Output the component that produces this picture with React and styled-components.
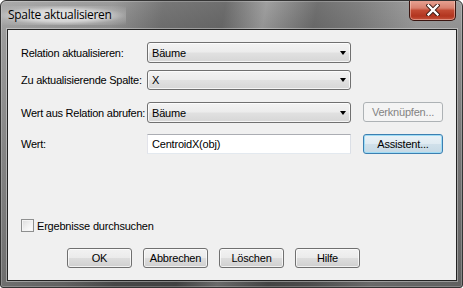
import React from "react";
import styled, { createGlobalStyle, css } from "styled-components";

const Global = createGlobalStyle`
  html, body { margin: 0; padding: 0; background: #ffffff; }
  body { width: 463px; height: 288px; overflow: hidden; }
  * { box-sizing: border-box; }
`;

const Window = styled.div`
  width: 463px;
  height: 288px;
  display: flex;
  flex-direction: column;
  border: 1px solid #343434;
  border-radius: 6px 6px 3px 3px;
  overflow: hidden;
  padding: 0 5px 6px 6px;
  background:
    linear-gradient(100deg,
      rgba(255,255,255,0.2) 0%,
      rgba(255,255,255,0.05) 22%,
      rgba(0,0,0,0.2) 32%,
      rgba(0,0,0,0.26) 44%,
      rgba(255,255,255,0.1) 52%,
      rgba(0,0,0,0.24) 62%,
      rgba(0,0,0,0.14) 70%,
      rgba(255,255,255,0.1) 82%,
      rgba(255,255,255,0.05) 100%),
    linear-gradient(to bottom, #959595 0%, #848484 12%, #6c6c6c 55%, #585858 100%);
  box-shadow: inset 0 0 0 1px rgba(255,255,255,0.22);
`;

const TitleBar = styled.div`
  height: 28px;
  display: flex;
  align-items: flex-start;
  justify-content: space-between;
  flex: none;
`;

const Title = styled.span`
  margin-top: 5px;
  margin-left: -9px;
  padding: 2px 14px 3px 10px;
  font-family: "Open Sans", "Noto Sans", sans-serif;
  font-size: 12px;
  letter-spacing: -0.3px;
  line-height: 14px;
  color: #000;
  background: radial-gradient(ellipse at center,
    rgba(235,235,235,0.95) 0%,
    rgba(225,225,225,0.8) 45%,
    rgba(200,200,200,0.35) 70%,
    rgba(160,160,160,0) 100%);
`;

const CloseButton = styled.div`
  width: 47px;
  height: 21px;
  margin-top: -1px;
  margin-right: 1px;
  border: 1px solid #3b1510;
  border-top: none;
  border-radius: 0 0 5px 5px;
  display: flex;
  align-items: center;
  justify-content: center;
  background: linear-gradient(to bottom,
    #e8a596 0%, #d8806e 40%, #c24a33 52%, #b2351f 80%, #c5533d 100%);
  box-shadow: inset 0 0 0 1px rgba(255,220,210,0.45);
`;

const Client = styled.div`
  flex: 1;
  display: flex;
  flex-direction: column;
  background: #f0f0f0;
  border: 1px solid #232323;
  box-shadow: 0 0 0 1px rgba(255,255,255,0.35);
  padding: 12px 0 0 13px;
  font-family: "Liberation Sans", Arial, sans-serif;
  font-size: 11px;
  color: #000;
`;

const Form = styled.div`
  display: grid;
  grid-template-columns: 126px 204px 92px;
`;

const Row = styled.div`
  display: contents;
`;

const Label = styled.label`
  display: flex;
  align-items: center;
  white-space: nowrap;
  letter-spacing: -0.25px;
  margin-top: ${(p) => p.$top || 0}px;
  height: ${(p) => p.$h || 21}px;
`;

const Combo = styled.div`
  margin-top: ${(p) => p.$top || 0}px;
  height: ${(p) => p.$h || 21}px;
  display: flex;
  align-items: center;
  justify-content: space-between;
  padding: 0 4px 0 4px;
  border: 1px solid #707070;
  border-radius: 3px;
  background: linear-gradient(to bottom, #f3f3f3 0%, #ececec 48%, #e1e1e1 52%, #d6d6d6 100%);
  box-shadow: inset 0 0 0 1px rgba(255,255,255,0.75);
  letter-spacing: -0.2px;
`;

const Arrow = styled.span`
  width: 0;
  height: 0;
  border-left: 3.5px solid transparent;
  border-right: 3.5px solid transparent;
  border-top: 4px solid #000;
`;

const TextField = styled.div`
  margin-top: ${(p) => p.$top || 0}px;
  height: 20px;
  display: flex;
  align-items: center;
  padding-left: 4px;
  background: #fff;
  border: 1px solid;
  border-color: #abadb3 #dbdfe6 #e3e9ef #e2e3ea;
  letter-spacing: -0.2px;
`;

const Button = styled.div`
  height: ${(p) => p.$h || 20}px;
  width: ${(p) => p.$w || 80}px;
  margin-top: ${(p) => p.$top || 0}px;
  justify-self: end;
  display: flex;
  align-items: center;
  justify-content: center;
  border: 1px solid #707070;
  border-radius: 3px;
  background: linear-gradient(to bottom, #f2f2f2 0%, #ebebeb 48%, #dddddd 52%, #cfcfcf 100%);
  box-shadow: inset 0 0 0 1px rgba(255,255,255,0.7);
  letter-spacing: -0.2px;
  color: #000;
  ${(p) =>
    p.$disabled &&
    css`
      border-color: #adb2b5;
      background: #f4f4f4;
      box-shadow: none;
      color: #838383;
    `}
  ${(p) =>
    p.$default &&
    css`
      border-color: #3c7fb1;
      background: linear-gradient(to bottom, #eaf2f7 0%, #e0ebf2 48%, #d0e0ea 52%, #c6d9e5 100%);
      box-shadow: inset 0 0 0 1px #9fdcf5;
    `}
`;

const CheckRow = styled.div`
  margin-top: 65px;
  display: flex;
  align-items: center;
  gap: 3px;
  height: 13px;
  letter-spacing: -0.2px;
`;

const CheckBox = styled.span`
  width: 13px;
  height: 13px;
  border: 1px solid #8e8f8f;
  background: linear-gradient(135deg, #dcdcdc 0%, #f4f4f4 60%, #ffffff 100%);
  box-shadow: inset 0 0 0 1px #f4f4f4;
`;

const ButtonRow = styled.div`
  margin-top: 16px;
  padding-left: 46px;
  display: flex;
  gap: 11px;
`;

export default function App() {
  return (
    <>
      <Global />
      <Window>
        <TitleBar>
          <Title>Spalte aktualisieren</Title>
          <CloseButton>
            <svg width="14" height="12" viewBox="0 0 14 12">
              <path d="M2.5 1.5 L11.5 10.5 M11.5 1.5 L2.5 10.5" stroke="#3a1a14" strokeWidth="4.2" strokeLinecap="square" />
              <path d="M2.5 1.5 L11.5 10.5 M11.5 1.5 L2.5 10.5" stroke="#ffffff" strokeWidth="2.4" strokeLinecap="square" />
            </svg>
          </CloseButton>
        </TitleBar>
        <Client>
          <Form>
            <Row>
              <Label>Relation aktualisieren:</Label>
              <Combo>
                <span>Bäume</span>
                <Arrow />
              </Combo>
              <span />
            </Row>
            <Row>
              <Label $top={7} $h={20}>Zu aktualisierende Spalte:</Label>
              <Combo $top={7} $h={20}>
                <span>X</span>
                <Arrow />
              </Combo>
              <span />
            </Row>
            <Row>
              <Label $top={12}>Wert aus Relation abrufen:</Label>
              <Combo $top={12}>
                <span>Bäume</span>
                <Arrow />
              </Combo>
              <Button $top={12} $disabled>Verknüpfen...</Button>
            </Row>
            <Row>
              <Label $top={11} $h={20}>Wert:</Label>
              <TextField $top={11}>CentroidX(obj)</TextField>
              <Button $top={11} $default>Assistent...</Button>
            </Row>
          </Form>
          <CheckRow>
            <CheckBox />
            <span>Ergebnisse durchsuchen</span>
          </CheckRow>
          <ButtonRow>
            <Button $w={65}>OK</Button>
            <Button $w={65}>Abbrechen</Button>
            <Button $w={65}>Löschen</Button>
            <Button $w={65}>Hilfe</Button>
          </ButtonRow>
        </Client>
      </Window>
    </>
  );
}
